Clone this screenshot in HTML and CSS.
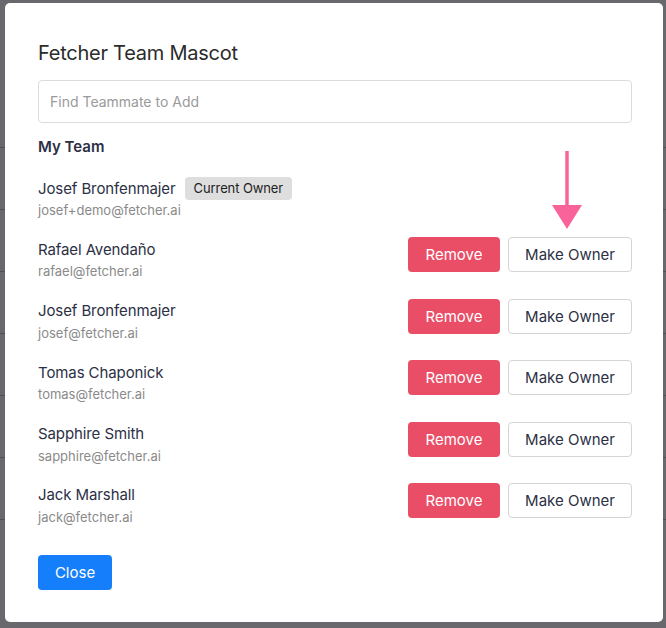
FILE: index.html
```html
<!DOCTYPE html>
<html lang="en">
<head>
    <meta charset="UTF-8">
    <meta name="viewport" content="width=device-width, initial-scale=1.0">
    <title>Fetcher Team Mascot</title>
    <link rel="stylesheet" href="styles.css">
</head>
<body>
    <div class="page">
        <div class="page-row"></div>
        <div class="page-row"></div>
        <div class="page-row"></div>
        <div class="page-row"></div>
        <div class="page-row"></div>
        <div class="page-row"></div>
        <div class="page-row"></div>
    </div>

    <div class="backdrop"></div>

    <div class="modal">
        <h2 class="modal-title">Fetcher Team Mascot</h2>
        <input class="search" type="text" placeholder="Find Teammate to Add">

        <h3 class="section-title">My Team</h3>
        <ul class="team">
            <li class="member">
                <div class="info">
                    <div class="name">Josef Bronfenmajer <span class="badge">Current Owner</span></div>
                    <div class="email">josef+demo@fetcher.ai</div>
                </div>
            </li>
            <li class="member">
                <div class="info">
                    <div class="name">Rafael Avendaño</div>
                    <div class="email">rafael@fetcher.ai</div>
                </div>
                <div class="actions">
                    <button class="btn btn-danger">Remove</button>
                    <button class="btn btn-outline">Make Owner</button>
                </div>
            </li>
            <li class="member">
                <div class="info">
                    <div class="name">Josef Bronfenmajer</div>
                    <div class="email">josef@fetcher.ai</div>
                </div>
                <div class="actions">
                    <button class="btn btn-danger">Remove</button>
                    <button class="btn btn-outline">Make Owner</button>
                </div>
            </li>
            <li class="member">
                <div class="info">
                    <div class="name">Tomas Chaponick</div>
                    <div class="email">tomas@fetcher.ai</div>
                </div>
                <div class="actions">
                    <button class="btn btn-danger">Remove</button>
                    <button class="btn btn-outline">Make Owner</button>
                </div>
            </li>
            <li class="member">
                <div class="info">
                    <div class="name">Sapphire Smith</div>
                    <div class="email">sapphire@fetcher.ai</div>
                </div>
                <div class="actions">
                    <button class="btn btn-danger">Remove</button>
                    <button class="btn btn-outline">Make Owner</button>
                </div>
            </li>
            <li class="member">
                <div class="info">
                    <div class="name">Jack Marshall</div>
                    <div class="email">jack@fetcher.ai</div>
                </div>
                <div class="actions">
                    <button class="btn btn-danger">Remove</button>
                    <button class="btn btn-outline">Make Owner</button>
                </div>
            </li>
        </ul>

        <button class="btn btn-primary">Close</button>

        <!-- annotation arrow pointing at Make Owner -->
        <svg class="arrow" width="32" height="80" viewBox="0 0 32 80">
            <line x1="15" y1="0" x2="15" y2="58" stroke="#f8649a" stroke-width="3.5"/>
            <polygon points="0,54 30,54 15,78" fill="#f8649a"/>
        </svg>
    </div>
</body>
</html>
```

FILE: styles.css
```css
* {
    box-sizing: border-box;
}
body {
    margin: 0;
    font-family: Inter, "Noto Sans", sans-serif;
    background-color: #ffffff;
    overflow: hidden;
}
.page {
    padding-top: 86px;
}
.page-row {
    height: 62px;
    border-bottom: 1px solid #bbb;
}
.backdrop {
    position: fixed;
    inset: 0;
    background: rgba(20, 20, 26, 0.64);
}
.modal {
    position: absolute;
    top: 3px;
    left: 5px;
    width: 658px;
    height: 619px;
    padding: 38px 31px 32px 33px;
    background: #fff;
    border-radius: 5px;
}
.modal-title {
    margin: 0;
    font-size: 20px;
    line-height: 24px;
    font-weight: 400;
    color: #2b2b2b;
    letter-spacing: -0.25px;
}
.search {
    display: block;
    width: 100%;
    height: 43px;
    margin-top: 15px;
    padding: 0 11px;
    font-family: inherit;
    font-size: 14px;
    border: 1px solid #dcdcdc;
    border-radius: 4px;
}
.search::placeholder {
    color: #9a9a9a;
}
.section-title {
    margin: 14px 0 0;
    font-size: 15px;
    line-height: 20px;
    font-weight: 600;
    color: #2c3045;
}
.team {
    list-style: none;
    margin: 21px 0 0;
    padding: 0;
    display: flex;
    flex-direction: column;
    gap: 20.4px;
}
.member {
    display: flex;
    align-items: flex-start;
    justify-content: space-between;
}
.info {
    display: flex;
    flex-direction: column;
}
.name {
    display: flex;
    align-items: center;
    gap: 9px;
    height: 20px;
    font-size: 15px;
    color: #2c3045;
    letter-spacing: -0.1px;
}
.email {
    font-size: 13px;
    line-height: 18px;
    margin-top: 3px;
    color: #8a8a8a;
}
.badge {
    display: inline-block;
    padding: 0 9px;
    height: 23px;
    line-height: 23px;
    font-size: 13px;
    color: #222;
    background: #dedede;
    border-radius: 4px;
}
.actions {
    display: flex;
    gap: 8px;
    margin-top: -2px;
}
.btn {
    height: 35px;
    padding: 0 16px;
    font-family: inherit;
    font-size: 15px;
    border-radius: 4px;
    cursor: pointer;
}
.btn-danger {
    width: 92px;
    background: #ea4e66;
    color: #fff;
    border: none;
}
.btn-outline {
    width: 124px;
    background: #fff;
    color: #2c3045;
    border: 1px solid #d4d4d4;
}
.btn-primary {
    margin-top: 29px;
    width: 74px;
    background: #157ffb;
    color: #fff;
    border: none;
}
.arrow {
    position: absolute;
    left: 547px;
    top: 148px;
}
```
